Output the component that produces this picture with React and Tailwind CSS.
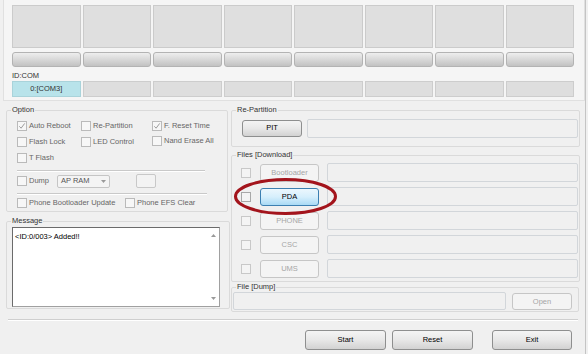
const slots = Array.from({ length: 8 });

function Check({ checked }) {
  return (
    <span className="flex h-[10px] w-[10px] shrink-0 items-center justify-center border border-[#bababa] bg-[#f7f7f7]">
      {checked && (
        <svg width="8" height="8" viewBox="0 0 8 8">
          <path d="M1.3 4.3 L3.1 6.2 L6.7 1.4" fill="none" stroke="#9c9c9c" strokeWidth="1" />
        </svg>
      )}
    </span>
  );
}

function Opt({ label, checked }) {
  return (
    <div className="flex items-center gap-[2px]">
      <Check checked={checked} />
      <span>{label}</span>
    </div>
  );
}

// group box: padding goes on the inner div so the legend stays put
function Group({ title, className = "", inner = "", children }) {
  return (
    <fieldset className={`rounded-[2px] border border-[#dadada] ${className}`}>
      <legend className="ml-[4px] px-[1px] leading-[10px] text-[#333]">{title}</legend>
      <div className={inner}>{children}</div>
    </fieldset>
  );
}

function Btn({ children, kind = "normal", className = "" }) {
  const look = {
    normal: "border-[#8e8f8f] bg-linear-to-b from-[#f4f4f4] via-[#e8e8e8] to-[#d2d2d2] text-black",
    off: "border-[#c6c6c6] bg-[#f4f4f4] text-[#a6a6a6]",
    blue: "border-[#3c7fb1] bg-linear-to-b from-[#ecf7fd] via-[#d6effc] to-[#a9daf5] text-black",
  }[kind];
  return (
    <div className={`flex items-center justify-center rounded-[3px] border ${look} ${className}`}>
      {children}
    </div>
  );
}

function Field({ className = "" }) {
  return <div className={`rounded-[2px] border border-[#d2d6da] bg-[#f0f0f0] ${className}`} />;
}

function Arrow({ up }) {
  return (
    <svg width="5" height="3" viewBox="0 0 5 3">
      <path d={up ? "M0 3 L2.5 0 L5 3 Z" : "M0 0 L2.5 3 L5 0 Z"} fill="#9a9a9a" />
    </svg>
  );
}

export default function App() {
  const files = ["Bootloader", "PDA", "PHONE", "CSC", "UMS"];
  return (
    <div className="relative h-[354px] w-[588px] overflow-hidden bg-[#f0f0f0] font-['Liberation_Sans',Arial,sans-serif] text-[7.5px]">
      <div className="h-full w-[586px] border-r border-[#c4c4c4]">
        {/* device slots */}
        <div className="ml-[3px] h-[101px] border-x border-b border-[#e0e0e0] bg-[#f5f5f5] pl-[8px] pr-[10px] pt-[5px]">
          <div className="grid grid-cols-8 gap-[2px]">
            {slots.map((_, i) => (
              <div key={i} className="h-[43px] border border-[#cbcbcb] bg-[#dfdfdf]" />
            ))}
          </div>
          <div className="mt-[4px] grid grid-cols-8 gap-[2px]">
            {slots.map((_, i) => (
              <div
                key={i}
                className="h-[15px] rounded-[3px] border border-[#b3b3b3] bg-linear-to-b from-[#eeeeee] via-[#d8d8d8] to-[#c2c2c2]"
              />
            ))}
          </div>
          <div className="mt-[4px] leading-[10px] text-[#333]">ID:COM</div>
          <div className="grid grid-cols-8 gap-[2px]">
            {slots.map((_, i) =>
              i === 0 ? (
                <div key={i} className="h-[16px] border border-[#a9d3da] bg-[#b8e3ea] text-center leading-[14px] text-[#333]">
                  0:[COM3]
                </div>
              ) : (
                <div key={i} className="h-[16px] border border-[#cdcdcd] bg-[#dedede]" />
              )
            )}
          </div>
        </div>

        {/* middle */}
        <div className="flex h-[218px] items-start">
          <div className="ml-[6px] w-[224px]">
            <Group title="Option" className="mt-[4px] w-[222px]" inner="pl-[10px] text-[#666]">
              <div className="grid auto-rows-[16px] grid-cols-[64px_71px_1fr] items-center pt-[3px]">
                <Opt label="Auto Reboot" checked />
                <Opt label="Re-Partition" />
                <Opt label="F. Reset Time" checked />
                <Opt label="Flash Lock" />
                <Opt label="LED Control" />
                <div className="-mt-[3px]">
                  <Opt label="Nand Erase All" />
                </div>
                <Opt label="T Flash" />
              </div>
              <div className="mt-[4px] w-[188px] border-b border-t border-b-white border-t-[#c9c9c9]" />
              <div className="flex h-[18px] items-center">
                <Check />
                <span className="ml-[2px] w-[28px]">Dump</span>
                <div className="flex h-[13px] w-[53px] items-center justify-between rounded-[2px] border border-[#c5c5c5] bg-[#f4f4f4] px-[3px] text-[#555]">
                  <span>AP RAM</span>
                  <Arrow />
                </div>
                <div className="ml-[26px] h-[14px] w-[20px] rounded-[2px] border border-[#c8c8c8] bg-[#f3f3f3]" />
              </div>
              <div className="mt-[3px] w-[190px] border-b border-t border-b-white border-t-[#c9c9c9]" />
              <div className="flex h-[16px] items-center">
                <div className="w-[108px]">
                  <Opt label="Phone Bootloader Update" />
                </div>
                <Opt label="Phone EFS Clear" />
              </div>
            </Group>

            <Group title="Message" className="mt-[4px] w-[224px]" inner="pb-[1px] pl-[5px]">
              <div className="mt-[1px] flex h-[80px] w-[208px] border border-[#a0a0a0] border-l-[#6b6b6b] border-t-[#6b6b6b] bg-white">
                <div className="flex-1 pl-[2px] pt-[4px] leading-[10px] text-black">{"<ID:0/003> Added!!"}</div>
                <div className="flex w-[12px] flex-col items-center justify-between py-[6px]">
                  <Arrow up />
                  <Arrow />
                </div>
              </div>
            </Group>
          </div>

          <div className="ml-[1px] w-[349px]">
            <Group title="Re-Partition" className="mt-[4px]" inner="pb-[8px] pl-[10px] pr-[1px]">
              <div className="mt-[3px] flex h-[20px] items-center">
                <Btn className="h-[17px] w-[60px]">PIT</Btn>
                <Field className="ml-[5px] h-[19px] flex-1" />
              </div>
            </Group>

            <Group title="Files [Download]" className="mt-[3px]" inner="pb-[3px] pl-[9px] pr-[1px]">
              <div className="flex flex-col gap-[5px] pt-[3px]">
                {files.map((f) => (
                  <div key={f} className="flex h-[19px] items-center">
                    <span className={`h-[10px] w-[10px] border bg-[#f4f4f4] ${f === "PDA" ? "border-[#a8a8a8]" : "border-[#c8c8c8]"}`} />
                    <Btn kind={f === "PDA" ? "blue" : "off"} className="ml-[9px] h-[18px] w-[59px]">
                      {f}
                    </Btn>
                    <Field className="ml-[8px] h-[19px] flex-1" />
                  </div>
                ))}
              </div>
            </Group>

            <Group title="File [Dump]" className="w-[348px]" inner="pb-[1px] pl-[1px]">
              <div className="flex items-start">
                <Field className="h-[18px] w-[273px]" />
                <Btn kind="off" className="ml-[6px] mt-[1px] h-[17px] w-[60px]">
                  Open
                </Btn>
              </div>
            </Group>
          </div>
        </div>

        <div className="ml-[8px] w-[570px] border-b border-t border-b-white border-t-[#cfcfcf]" />

        <div className="mt-[9px] flex">
          <Btn className="ml-[305px] h-[20px] w-[81px]">Start</Btn>
          <Btn className="ml-[6px] h-[20px] w-[81px]">Reset</Btn>
          <Btn className="ml-[19px] h-[20px] w-[80px]">Exit</Btn>
        </div>
      </div>

      {/* annotation around PDA */}
      <svg className="absolute left-[233px] top-[177px]" width="106" height="40" viewBox="0 0 106 40">
        <ellipse cx="52.5" cy="19.5" rx="50" ry="17" fill="none" stroke="#a3141c" strokeWidth="3" />
      </svg>
    </div>
  );
}
